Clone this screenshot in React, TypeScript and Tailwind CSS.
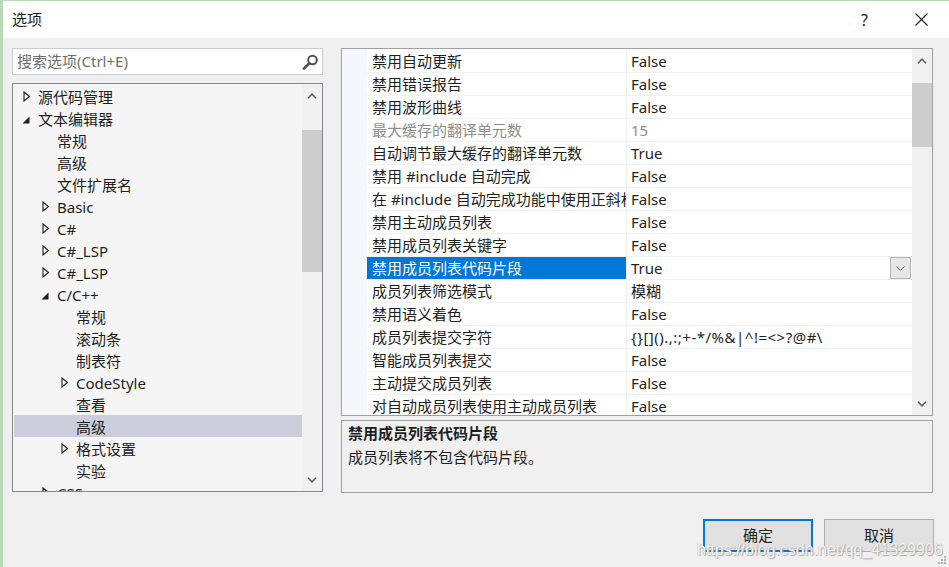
import React from 'react';

type TreeItem = { label: string; level: 0 | 1 | 2; expander?: 'open' | 'closed'; selected?: boolean };

const TREE: TreeItem[] = [
  { label: '源代码管理', level: 0, expander: 'closed' },
  { label: '文本编辑器', level: 0, expander: 'open' },
  { label: '常规', level: 1 },
  { label: '高级', level: 1 },
  { label: '文件扩展名', level: 1 },
  { label: 'Basic', level: 1, expander: 'closed' },
  { label: 'C#', level: 1, expander: 'closed' },
  { label: 'C#_LSP', level: 1, expander: 'closed' },
  { label: 'C#_LSP', level: 1, expander: 'closed' },
  { label: 'C/C++', level: 1, expander: 'open' },
  { label: '常规', level: 2 },
  { label: '滚动条', level: 2 },
  { label: '制表符', level: 2 },
  { label: 'CodeStyle', level: 2, expander: 'closed' },
  { label: '查看', level: 2 },
  { label: '高级', level: 2, selected: true },
  { label: '格式设置', level: 2, expander: 'closed' },
  { label: '实验', level: 2 },
  { label: 'CSS', level: 1, expander: 'closed' },
];

const INDENT = ['pl-0', 'pl-[19px]', 'pl-[38px]'];

type Prop = { name: string; value: string; disabled?: boolean; selected?: boolean; wide?: boolean };

const PROPS: Prop[] = [
  { name: '禁用自动更新', value: 'False' },
  { name: '禁用错误报告', value: 'False' },
  { name: '禁用波形曲线', value: 'False' },
  { name: '最大缓存的翻译单元数', value: '15', disabled: true },
  { name: '自动调节最大缓存的翻译单元数', value: 'True' },
  { name: '禁用 #include 自动完成', value: 'False' },
  { name: '在 #include 自动完成功能中使用正斜杠', value: 'False' },
  { name: '禁用主动成员列表', value: 'False' },
  { name: '禁用成员列表关键字', value: 'False' },
  { name: '禁用成员列表代码片段', value: 'True', selected: true },
  { name: '成员列表筛选模式', value: '模糊' },
  { name: '禁用语义着色', value: 'False' },
  { name: '成员列表提交字符', value: '{}[]().,:;+-*/%&|^!=<>?@#\\', wide: true },
  { name: '智能成员列表提交', value: 'False' },
  { name: '主动提交成员列表', value: 'False' },
  { name: '对自动成员列表使用主动成员列表', value: 'False' },
];

const Chevron = ({ up }: { up?: boolean }) => (
  <svg width="10" height="6" viewBox="0 0 10 6">
    <polyline
      points={up ? '1,5.2 5,1.2 9,5.2' : '1,0.8 5,4.8 9,0.8'}
      fill="none"
      stroke="#606060"
      strokeWidth="1.6"
    />
  </svg>
);

const Expander = ({ kind }: { kind?: 'open' | 'closed' }) => {
  if (kind === 'closed')
    return (
      <svg width="8" height="11" viewBox="0 0 8 11" className="ml-[10px]">
        <path d="M1 1 L6.5 5.5 L1 10 Z" fill="none" stroke="#1e1e1e" strokeWidth="1.1" />
      </svg>
    );
  if (kind === 'open')
    return (
      <svg width="8" height="8" viewBox="0 0 8 8" className="ml-[9px] mt-[4px]">
        <path d="M7.5 0.5 L7.5 7.5 L0.5 7.5 Z" fill="#1e1e1e" />
      </svg>
    );
  return null;
};

const Scrollbar = ({ upH, thumbTop, thumbH, downH }: { upH: string; thumbTop: string; thumbH: string; downH: string }) => (
  <div className="flex w-[20px] shrink-0 flex-col bg-[#f0f0f0]">
    <div className={`flex ${upH} items-center justify-center`}>
      <Chevron up />
    </div>
    <div className="flex-1">
      <div className={`${thumbTop} ${thumbH} bg-[#cdcdcd]`} />
    </div>
    <div className={`flex ${downH} items-center justify-center`}>
      <Chevron />
    </div>
  </div>
);

export default function App() {
  return (
    <div className="relative h-[567px] w-[949px] overflow-hidden border-l-[3px] border-t border-[#b8d8b8] bg-[#f0f0f0] font-['Noto_Sans','Noto_Sans_CJK_SC',sans-serif] text-[15px] text-[#1e1e1e]">
      {/* title bar */}
      <div className="flex h-[37px] items-center bg-white pl-[9px] pr-[21px]">
        <span className="leading-none">选项</span>
        <div className="ml-auto flex items-center gap-[47px]">
          <span className="text-[16px] leading-none">?</span>
          <svg width="13" height="13" viewBox="0 0 13 13">
            <path d="M0.5 0.5 L12.5 12.5 M12.5 0.5 L0.5 12.5" stroke="#1e1e1e" strokeWidth="1.1" />
          </svg>
        </div>
      </div>

      <div className="flex items-start pl-[9px] pt-[10px]">
        {/* left column */}
        <div className="flex w-[311px] flex-col">
          <div className="flex h-[27px] items-center border border-[#c9cbd9] bg-white pl-[4px] pr-[3px]">
            <span className="leading-none text-[#6d6d6d]">搜索选项(Ctrl+E)</span>
            <svg width="18" height="16" viewBox="0 0 18 16" className="ml-auto">
              <circle cx="11.5" cy="6" r="4.3" fill="none" stroke="#505050" strokeWidth="2" />
              <path d="M8.3 9.3 L3 14.5" stroke="#505050" strokeWidth="2.6" strokeLinecap="round" />
            </svg>
          </div>
          <div className="mt-[8px] flex h-[409px] border border-[#828790] bg-[#f5f5f5]">
            <div className="flex-1 overflow-hidden pt-[1px]">
              {TREE.map((t, i) => (
                <div
                  key={i}
                  className={`flex h-[22px] items-center whitespace-nowrap ${INDENT[t.level]} ${t.selected ? 'ml-[1px] bg-[#cccedb]' : ''}`}
                >
                  <div className={`flex h-[22px] ${t.selected ? 'w-[24px]' : 'w-[25px]'} shrink-0 items-center`}>
                    <Expander kind={t.expander} />
                  </div>
                  <span className="pt-[1px] leading-[22px]">{t.label}</span>
                </div>
              ))}
            </div>
            <Scrollbar upH="h-[24px]" thumbTop="mt-[22px]" thumbH="h-[142px]" downH="h-[22px]" />
          </div>
        </div>

        {/* right column */}
        <div className="ml-[18px] flex w-[592px] flex-col">
          <div className="flex h-[368px] border border-[#a0a0a0] bg-white">
            <div className="w-[25px] shrink-0 bg-[#f4f7fc]" />
            <div className="flex-1 overflow-hidden pt-[1px]">
              {PROPS.map((p, i) => (
                <div key={i} className="flex h-[23px] border-b border-[#eef1f6]">
                  <div
                    className={`flex w-[260px] shrink-0 items-center overflow-hidden whitespace-nowrap border-r border-[#eef1f6] pl-[5px] pt-[1px] ${
                      p.selected ? 'bg-[#0078d7] text-white' : p.disabled ? 'text-[#8d8d8d]' : ''
                    }`}
                  >
                    {p.name}
                  </div>
                  <div className={`flex flex-1 items-center whitespace-nowrap pl-[4px] ${p.disabled ? 'text-[#8d8d8d]' : ''}`}>
                    <span className={`pt-[1px] ${p.wide ? 'tracking-[0.5px]' : ''}`}>{p.value}</span>
                    {p.selected && (
                      <div className="ml-auto mr-[1px] flex h-[22px] w-[21px] items-center justify-center border border-[#b4b4b4] bg-[#e6e6e6]">
                        <svg width="9" height="5" viewBox="0 0 9 5">
                          <polyline points="0.5,0.5 4.5,4.5 8.5,0.5" fill="none" stroke="#606060" strokeWidth="1" />
                        </svg>
                      </div>
                    )}
                  </div>
                </div>
              ))}
            </div>
            <Scrollbar upH="h-[24px]" thumbTop="mt-[10px]" thumbH="h-[64px]" downH="h-[22px]" />
          </div>
          <div className="mt-[4px] h-[73px] border border-[#a0a0a0] pl-[6px]">
            <div className="font-bold leading-[24px]">禁用成员列表代码片段</div>
            <div className="leading-[24px]">成员列表将不包含代码片段。</div>
          </div>
        </div>
      </div>

      {/* buttons */}
      <div className="mt-[26px] flex justify-end gap-[11px] pr-[15px]">
        <button className="h-[33px] w-[110px] border-2 border-[#0078d7] bg-[#e1e1e1]">确定</button>
        <button className="h-[33px] w-[110px] border border-[#adadad] bg-[#e1e1e1]">取消</button>
      </div>

      {/* watermark */}
      <div className="pointer-events-none absolute left-[694px] top-[537px] font-['Liberation_Sans',sans-serif] text-[16px] text-[#f2f2f2] [text-shadow:1px_1px_1px_#a8a8a8,-0.5px_-0.5px_0_#c0c0c0]">
        https://blog.csdn.net/qq_41329906
      </div>

      {/* resize grip */}
      <svg width="9" height="9" viewBox="0 0 9 9" className="absolute bottom-[2px] right-[2px]">
        <rect x="6" y="0" width="2" height="2" fill="#b0b0b0" />
        <rect x="3" y="3" width="2" height="2" fill="#b0b0b0" />
        <rect x="6" y="3" width="2" height="2" fill="#b0b0b0" />
        <rect x="0" y="6" width="2" height="2" fill="#b0b0b0" />
        <rect x="3" y="6" width="2" height="2" fill="#b0b0b0" />
        <rect x="6" y="6" width="2" height="2" fill="#b0b0b0" />
      </svg>
    </div>
  );
}
